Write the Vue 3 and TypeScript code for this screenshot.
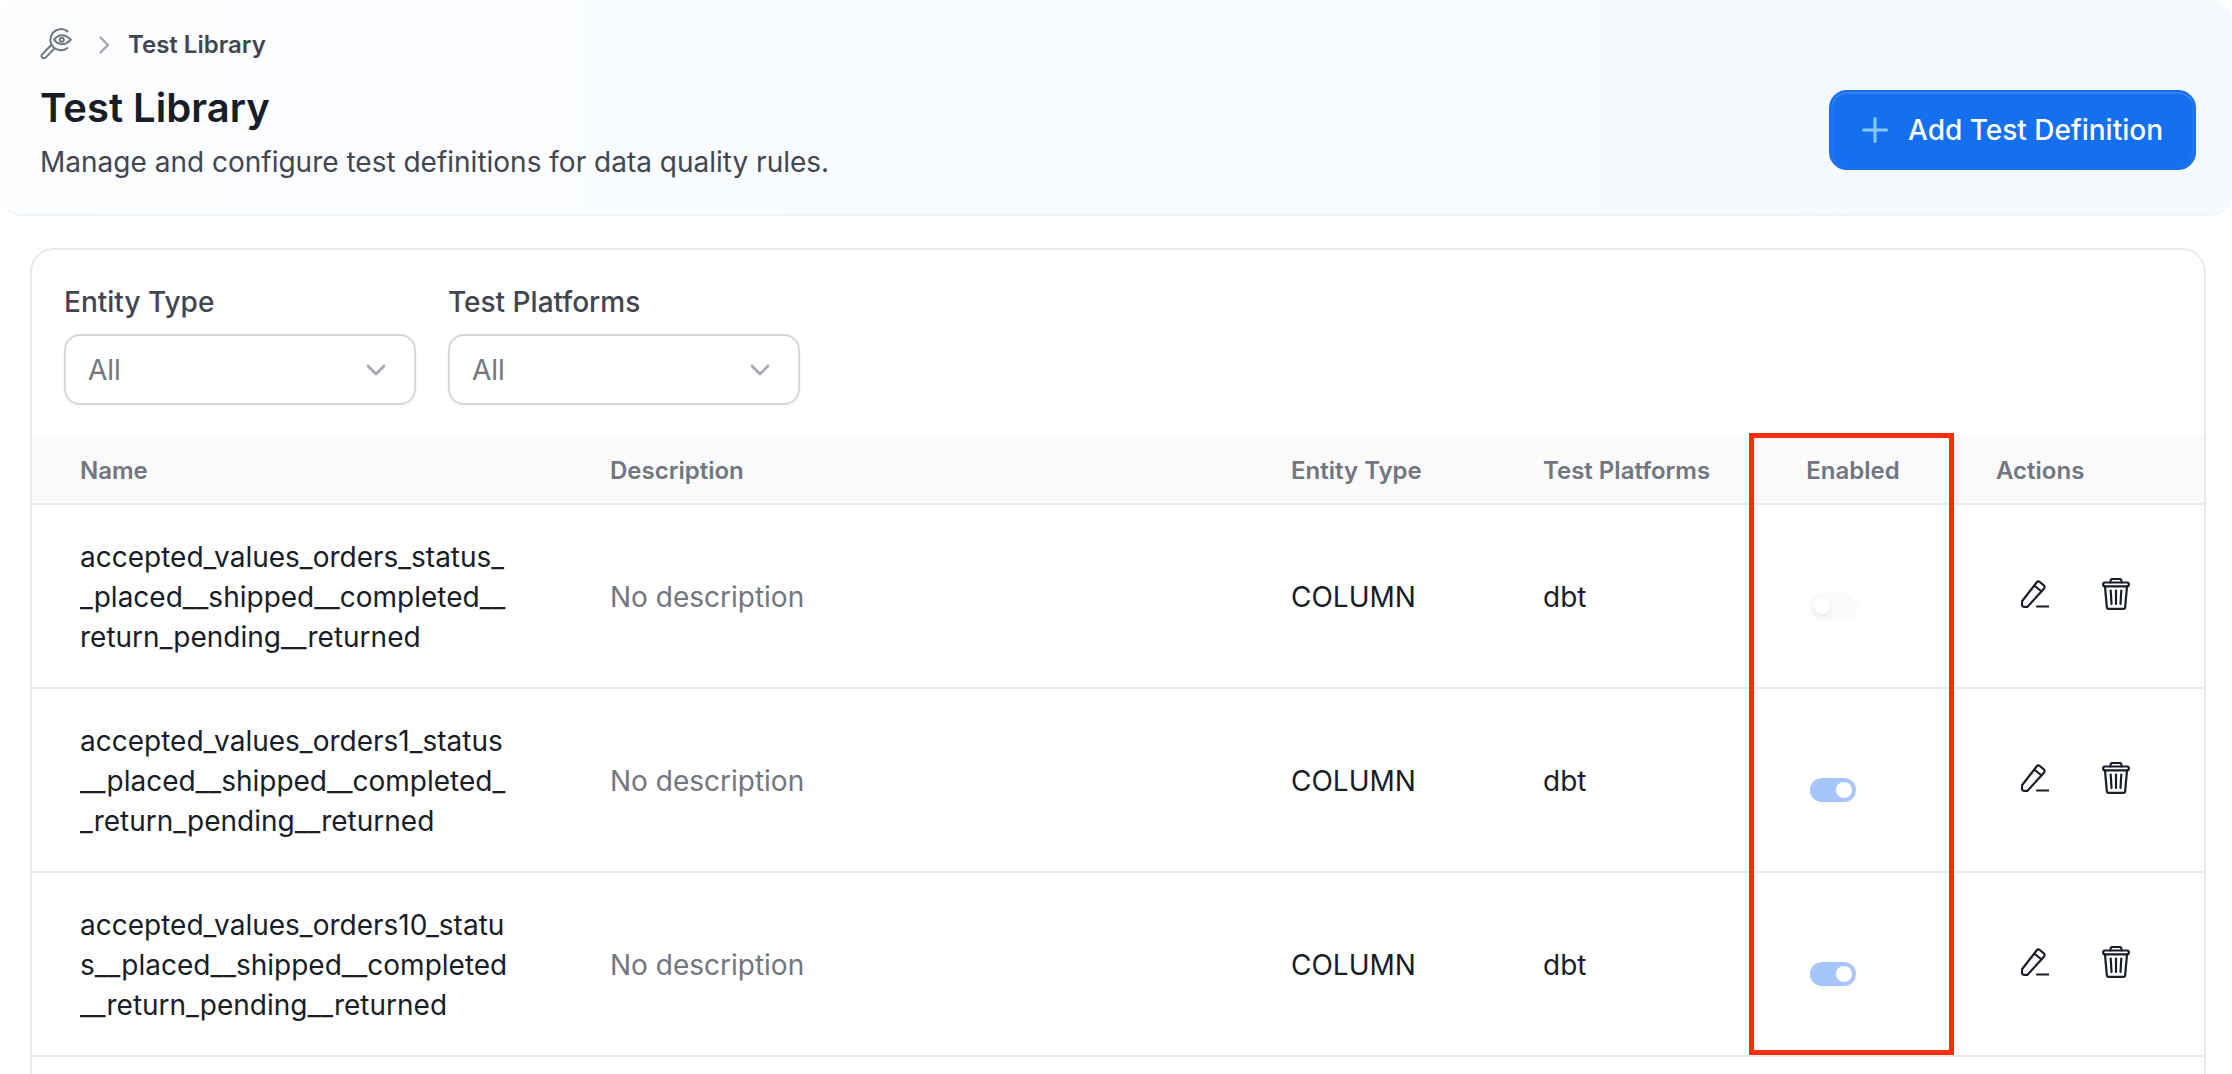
<script setup lang="ts">
interface Row {
  name: string[];
  enabled: boolean;
}

const rows: Row[] = [
  {
    name: ['accepted_values_orders_status_', '_placed__shipped__completed__', 'return_pending__returned'],
    enabled: false,
  },
  {
    name: ['accepted_values_orders1_status', '__placed__shipped__completed_', '_return_pending__returned'],
    enabled: true,
  },
  {
    name: ['accepted_values_orders10_statu', 's__placed__shipped__completed', '__return_pending__returned'],
    enabled: true,
  },
];
const filters = ['Entity Type', 'Test Platforms'];
</script>

<template>
  <div class="page">
    <header class="hero">
      <div class="hero-text">
        <nav class="crumbs">
          <svg class="crumb-logo" viewBox="0 0 32 32" fill="none" stroke="#717680" stroke-width="2" stroke-linecap="round" stroke-linejoin="round">
            <path d="M27.500 3.400A10.600 10.600 0 1 0 27.500 20" />
            <path d="M14 11.700C16.300 8.800 19 7.200 22 7.200s6 1.500 8.800 4.500c-2.800 3-5.800 4.500-8.800 4.500s-5.700-1.500-8-4.500Z" />
            <circle cx="21.800" cy="11.700" r="2" />
            <path d="M11 17.200 2.300 26.300a2.300 2.300 0 0 0 3.300 3.300l8.700-9" />
          </svg>
          <svg class="crumb-chevron" viewBox="0 0 10 18" fill="none" stroke="#a4a7ae" stroke-width="2.400" stroke-linecap="round" stroke-linejoin="round">
            <path d="M1.500 1.500 9 9l-7.500 7.500" />
          </svg>
          <span class="crumb-label">Test Library</span>
        </nav>
        <h1 class="title">Test Library</h1>
        <p class="subtitle">Manage and configure test definitions for data quality rules.</p>
      </div>
      <button class="add-btn" type="button">
        <svg class="plus" viewBox="0 0 26 26" fill="none" stroke="#84caff" stroke-width="3" stroke-linecap="round">
          <path d="M13 1.500v23M1.500 13h23" />
        </svg>
        <span>Add Test Definition</span>
      </button>
    </header>

    <section class="card">
      <div class="filters">
        <div v-for="f in filters" :key="f" class="filter">
          <label class="filter-label">{{ f }}</label>
          <div class="select">
            <span>All</span>
            <svg class="select-chevron" viewBox="0 0 20 12" fill="none" stroke="#a4a7ae" stroke-width="2.600" stroke-linecap="round" stroke-linejoin="round">
              <path d="M2 2l8 8 8-8" />
            </svg>
          </div>
        </div>
      </div>

      <div class="grid-row head">
        <div class="cell first">Name</div>
        <div class="cell">Description</div>
        <div class="cell">Entity Type</div>
        <div class="cell">Test Platforms</div>
        <div class="cell head-center">Enabled</div>
        <div class="cell last">Actions</div>
      </div>

      <div v-for="(r, i) in rows" :key="i" class="grid-row body-row">
        <div class="cell first name">
          <span v-for="l in r.name" :key="l" class="name-line">{{ l }}</span>
        </div>
        <div class="cell muted">No description</div>
        <div class="cell">COLUMN</div>
        <div class="cell">dbt</div>
        <div class="cell toggle-cell">
          <span class="toggle" :class="{ on: r.enabled }"><span class="thumb"></span></span>
        </div>
        <div class="cell actions">
          <svg class="icon-edit" viewBox="0 0 28 28" fill="none" stroke="#181d27" stroke-width="2.200" stroke-linecap="round" stroke-linejoin="round">
            <path d="M6.500 26.800H3a2 2 0 0 1-2-2v-3.500L15.800 2.300a2.200 2.200 0 0 1 3-.300l4 3.300a2.200 2.200 0 0 1 .300 3.100Z" />
            <path d="M13.200 5.500l7.400 6" />
            <path d="M16 26.500h11.500" />
          </svg>
          <svg class="icon-trash" viewBox="0 0 28 32" fill="none" stroke="#181d27" stroke-width="2.200" stroke-linecap="round" stroke-linejoin="round">
            <path d="M8.500 4.500V3a2 2 0 0 1 2-2h7a2 2 0 0 1 2 2v1.500" />
            <rect x="1.100" y="4.500" width="25.800" height="3.800" rx="1.900" />
            <path d="M3 8.300 4.800 29a2 2 0 0 0 2 1.900h14.400a2 2 0 0 0 2-1.900L25 8.300" />
            <path d="M8.700 12.500l.8 13.500M14 12.500V26M19.300 12.500 18.500 26" />
          </svg>
        </div>
      </div>
    </section>

    <div class="highlight"></div>
  </div>
</template>

<style scoped>
.page {
  position: relative;
  width: 2232px;
  height: 1074px;
  overflow: hidden;
  background: #fff;
  font-family: Inter, "Liberation Sans", sans-serif;
  color: #181d27;
  display: flex;
  flex-direction: column;
}

.hero {
  flex: none;
  height: 216px;
  box-sizing: border-box;
  display: flex;
  justify-content: space-between;
  align-items: flex-end;
  padding: 28px 36px 32px 40px;
  background: linear-gradient(90deg, #fcfdff 0%, #f3f9fe 100%);
  border-bottom: 2px solid #eff5fb;
  border-radius: 22px;
}

.hero-text {
  display: flex;
  flex-direction: column;
}

.crumbs {
  display: flex;
  align-items: center;
  height: 32px;
}

.crumb-logo {
  width: 32px;
  height: 32px;
}

.crumb-chevron {
  width: 10px;
  height: 18px;
  margin-left: 27px;
  margin-top: 2px;
}

.crumb-label {
  margin-left: 19px;
  font-size: 24px;
  font-weight: 600;
  color: #414651;
}

.title {
  margin: 18px 0 0;
  font-size: 40px;
  line-height: 60px;
  font-weight: 600;
  color: #181d27;
}

.subtitle {
  margin: 4px 0 0;
  font-size: 28px;
  line-height: 40px;
  font-weight: 400;
  color: #414651;
}

.add-btn {
  width: 367px;
  height: 80px;
  margin-bottom: 12px;
  display: flex;
  align-items: center;
  justify-content: center;
  gap: 20px;
  background: #1570ef;
  border: 2px solid #1a6ff0;
  border-radius: 18px;
  box-shadow: inset 0 2px 0 rgba(255, 255, 255, 0.12), inset 2px 0 0 rgba(255, 255, 255, 0.05), inset -2px 0 0 rgba(255, 255, 255, 0.05);
  color: #fff;
  font-family: inherit;
  font-size: 28px;
  font-weight: 500;
}

.plus {
  width: 26px;
  height: 26px;
}

.card {
  flex: none;
  height: 900px;
  margin: 32px 26px 0 30px;
  border: 2px solid #e9eaeb;
  border-radius: 24px;
  background: #fff;
}

.filters {
  display: flex;
  gap: 32px;
  padding: 32px 32px 32px;
}

.filter {
  width: 352px;
  display: flex;
  flex-direction: column;
  gap: 12px;
}

.filter-label {
  font-size: 28px;
  line-height: 40px;
  font-weight: 500;
  color: #414651;
}

.select {
  height: 71px;
  box-sizing: border-box;
  display: flex;
  align-items: center;
  justify-content: space-between;
  padding: 0 28px 0 22px;
  border: 2px solid #d5d7da;
  border-radius: 16px;
  box-shadow: 0 2px 4px rgba(10, 13, 18, 0.05);
  font-size: 28px;
  color: #717680;
  background: #fff;
}

.select-chevron {
  width: 20px;
  height: 12px;
}

.grid-row {
  display: grid;
  grid-template-columns: 531px 681px 252px 262px 190px 1fr;
  border-bottom: 2px solid #e9eaeb;
  box-sizing: border-box;
}

.head {
  height: 68px;
  padding-top: 1px;
  background: #fafafa;
  font-size: 24px;
  font-weight: 600;
  color: #717680;
}

.body-row {
  height: 184px;
  font-size: 28px;
  font-weight: 400;
  color: #181d27;
}

.cell {
  display: flex;
  align-items: center;
  padding-left: 47px;
}

.cell.first,
.cell.last {
  padding-left: 48px;
}

.body-row .cell {
  padding-top: 2px;
}

.head-center {
  justify-content: center;
  padding-left: 0;
}

.name {
  flex-direction: column;
  align-items: flex-start;
  justify-content: center;
  line-height: 40px;
  white-space: nowrap;
}

.name-line {
  display: block;
}

.muted {
  color: #717680;
}

.body-row .toggle-cell {
  padding-left: 52px;
  padding-top: 19px;
}

.toggle {
  position: relative;
  display: block;
  width: 46px;
  height: 24px;
  border-radius: 12px;
  background: #fafafa;
  box-shadow: 0 0 5px 2px #fafafa;
}

.toggle.on {
  background: #a6c6fb;
  box-shadow: 0 1px 3px rgba(10, 13, 18, 0.04);
}

.thumb {
  position: absolute;
  top: 4px;
  left: 4px;
  width: 16px;
  height: 16px;
  border-radius: 50%;
  background: #fff;
  box-shadow: 0 3px 6px rgba(10, 13, 18, 0.07);
}

.toggle.on .thumb {
  left: 26px;
  box-shadow: none;
}

.actions {
  padding-left: 73px;
  padding-bottom: 7px;
  gap: 53px;
}

.icon-edit {
  width: 28px;
  height: 28px;
}

.icon-trash {
  width: 28px;
  height: 32px;
}

.highlight {
  position: absolute;
  left: 1749px;
  top: 433px;
  width: 205px;
  height: 622px;
  box-sizing: border-box;
  border: 5px solid #fb2c07;
  pointer-events: none;
}
</style>
